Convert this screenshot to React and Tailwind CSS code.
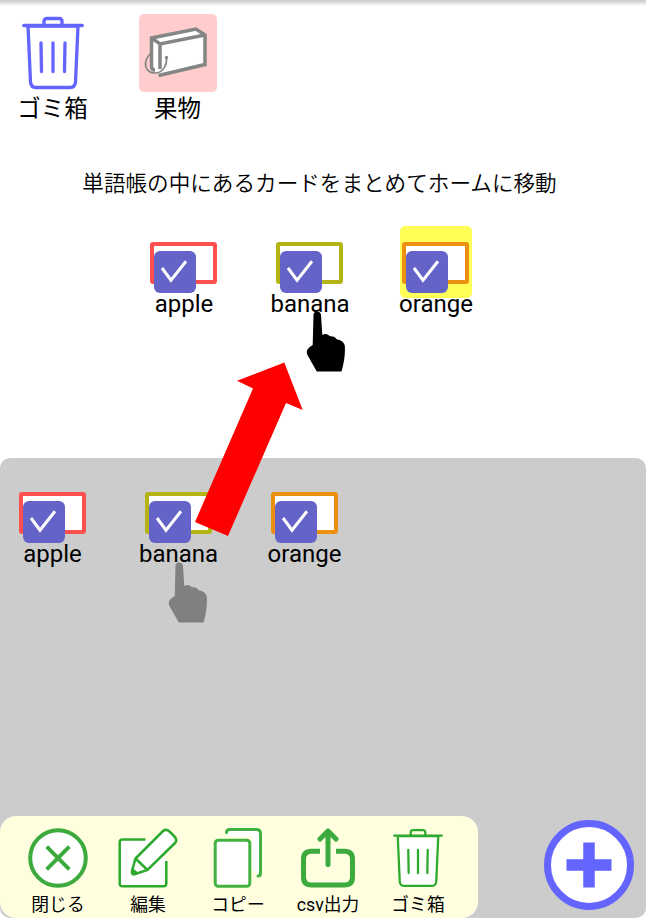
const CARDS = [
  { label: 'apple', frame: 'border-[#ff5050]' },
  { label: 'banana', frame: 'border-[#b4b414]' },
  { label: 'orange', frame: 'border-[#eb9010]' },
];

function Card({ label, frame, highlighted }) {
  return (
    <div className="flex w-[105px] flex-col items-center">
      <div className={`h-[72px] w-[72px] rounded-[5px] pl-[2px] pt-4 ${highlighted ? 'bg-[#ffff58]' : ''}`}>
        <div className={`h-[42px] w-[67px] rounded-[3px] border-4 bg-white ${frame}`}>
          <div className="mt-[4.5px] h-[42px] w-[42px] rounded-[6px] bg-[#6464c8]">
            <svg viewBox="0 0 42 42" className="h-full w-full" fill="none" stroke="white" strokeWidth="3">
              <path d="M8 17 L17 29.2 L32 10.3" />
            </svg>
          </div>
        </div>
      </div>
      <span className="-mt-[6px] text-2xl leading-6">{label}</span>
    </div>
  );
}

function TrashIcon({ className, strokeWidth, fill }) {
  return (
    <svg viewBox="0 0 62 74" className={className} fill="none" stroke="currentColor" strokeWidth={strokeWidth} strokeLinecap="round" strokeLinejoin="round">
      <path d="M6 10 L8.5 66 Q9 71.5 14 71.5 H48 Q53 71.5 53.5 66 L56 10 Z" fill={fill} />
      <path d="M1.7 9.5 H60.3 M22 8.5 V5.5 Q22 2.5 25 2.5 H37 Q40 2.5 40 5.5 V8.5" />
      <path d="M19 27 L19.5 55.5 M31 27 V55.5 M43 27 L42.5 55.5" />
    </svg>
  );
}

function WordBookIcon() {
  return (
    <svg viewBox="0 0 78 78" className="h-[78px] w-[78px]" fill="none" stroke="#858585" strokeWidth="3.5">
      <path d="M12 24 L57 14.5 L66 20.5 V50 L20 61 L12 55 Z" fill="white" stroke="none" />
      <path d="M16 56 Q12.5 56 12.5 52 V24 L57 15 L66 21 V50.5 L19.5 61.5" />
      <path d="M12.5 24 L21 30 L66 21 M21 30 V55" />
      <path d="M12 39 C2 49 7 59 16 59 C24 59 28 51 27.5 44" strokeWidth="1.7" />
      <circle cx="27.5" cy="43.5" r="1.7" fill="#858585" stroke="none" />
    </svg>
  );
}

function Hand({ className }) {
  return (
    <svg viewBox="0 0 40 62" className={className} fill="currentColor">
      <path d="M7.5 4 Q7.5 .5 11 .5 Q14.7 .5 15 4 L16.3 24 Q20.5 21.7 24 25.3 Q28.5 24.7 30.7 28.2 Q37 29 38.8 34.5 Q39.6 47 35.5 60.5 H10.8 L2 45 Q-.2 41 1.5 38.5 Q3 36 6.7 34 Z" />
    </svg>
  );
}

function CloseIcon() {
  return (
    <svg viewBox="0 0 60 60" className="h-[60px] w-[60px]" fill="none" stroke="currentColor" strokeWidth="4">
      <circle cx="30" cy="30" r="27.8" fill="white" />
      <path d="M18.7 18.7 L41.3 41.3 M41.3 18.7 L18.7 41.3" />
    </svg>
  );
}

function EditIcon() {
  return (
    <svg viewBox="0 0 60 60" className="h-[60px] w-[60px] text-[#2daa2d]" fill="none" stroke="currentColor" strokeWidth="2.5">
      <path d="M2 12 H42 L48 33 V58 H2 Z" fill="white" stroke="none" />
      <path d="M27.5 11.5 H4.5 Q1.7 11.5 1.7 14.3 V55.5 Q1.7 58.3 4.5 58.3 H45.5 Q48.3 58.3 48.3 55.5 V33" />
      <path d="M17.5 30.5 L45 3 Q48 .5 51.5 3.5 L56 8 Q60 12 57 15 L29.5 42 L16.5 46.3 Q13.5 47 14 43 Z" fill="white" />
      <path d="M17.5 30.5 L29.5 42" />
      <path d="M14.7 40 L20.5 45 L14 46.5 Z" fill="currentColor" stroke="none" />
    </svg>
  );
}

function CopyIcon() {
  return (
    <svg viewBox="0 0 60 60" className="h-[60px] w-[60px] text-[#41b241]" fill="none" stroke="currentColor" strokeWidth="3" strokeLinecap="round">
      <path d="M18.5 4.5 Q18.5 1.5 21.5 1.5 H48.5 Q52.5 1.5 52.5 5.5 V45 Q52.5 48 50 48" fill="white" />
      <path d="M5.5 8.5 H44 V59" fill="#ffffe0" stroke="none" />
      <rect x="7.2" y="12.2" width="34.6" height="46" rx="3" fill="white" />
    </svg>
  );
}

function ExportIcon() {
  return (
    <svg viewBox="0 0 60 60" className="h-[60px] w-[60px]" fill="none" stroke="currentColor" strokeWidth="5">
      <path d="M22 23.3 H13.5 Q5.5 23.3 5.5 31.3 V49 Q5.5 57 13.5 57 H46.5 Q54.5 57 54.5 49 V31.3 Q54.5 23.3 46.5 23.3 H38" />
      <path d="M30 36.5 V3.5 M22 11 L30 3 L38 11" strokeLinecap="round" strokeLinejoin="round" />
    </svg>
  );
}

const TOOLS = [
  { label: '閉じる', icon: <CloseIcon /> },
  { label: '編集', icon: <EditIcon /> },
  { label: 'コピー', icon: <CopyIcon /> },
  { label: 'csv出力', icon: <ExportIcon /> },
  { label: 'ゴミ箱', icon: <TrashIcon className="h-[60px] w-[52px] text-[#2daa2d]" strokeWidth="2.8" fill="white" /> },
];

export default function App() {
  return (
    <div className="relative flex h-[918px] w-[646px] flex-col overflow-hidden bg-white font-['Roboto','Noto_Sans_CJK_JP',sans-serif] text-black">
      <div className="h-[6px] shrink-0 bg-linear-to-b from-[#c8c8c8] to-white" />
      <main className="h-[452px] shrink-0">
        <div className="flex gap-[20px] pt-2">
          <div className="flex w-[105px] flex-col items-center">
            <div className="flex h-[78px] w-[78px] items-center justify-center text-[#6464ff]">
              <TrashIcon className="h-[74px] w-[62px]" strokeWidth="3.3" fill="none" />
            </div>
            <span className="mt-[5px] text-[23.5px] leading-6">ゴミ箱</span>
          </div>
          <div className="flex w-[105px] flex-col items-center">
            <div className="rounded-[5px] bg-[#ffcdcd]"><WordBookIcon /></div>
            <span className="mt-[5px] text-[23.5px] leading-6">果物</span>
          </div>
        </div>
        <p className="mt-[51px] pr-[7px] text-center text-[21.6px] leading-6 font-[350]">単語帳の中にあるカードをまとめてホームに移動</p>
        <div className="mt-[30px] flex gap-[21px] pl-[131.5px]">
          {CARDS.map((card) => <Card key={card.label} {...card} highlighted={card.label === 'orange'} />)}
        </div>
      </main>

      <section className="flex h-[460px] shrink-0 flex-col justify-between rounded-[10px] bg-[#cccccc]">
        <div className="flex gap-[21px] pt-[18px]">
          {CARDS.map((card) => <Card key={card.label} {...card} />)}
        </div>
        <div className="flex items-center justify-between pr-3">
          <nav className="flex h-[102px] w-[478px] rounded-[16px] bg-[#ffffe0] pl-[13px] pt-3 text-[#3caa3c]">
            {TOOLS.map((tool) => (
              <button key={tool.label} className="flex w-[90px] flex-col items-center">
                {tool.icon}
                <span className="mt-2 text-[17.8px] leading-[18px] text-black">{tool.label}</span>
              </button>
            ))}
          </nav>
          <button className="-mt-[5px] text-[#6464ff]" aria-label="+">
            <svg viewBox="0 0 90 90" className="h-[90px] w-[90px]">
              <circle cx="45" cy="45" r="41.5" fill="white" stroke="currentColor" strokeWidth="7" />
              <path d="M45 22.5 V67.5 M22.5 45 H67.5" stroke="currentColor" strokeWidth="11.5" />
            </svg>
          </button>
        </div>
      </section>

      <Hand className="absolute left-[306px] top-[310.5px] h-[62px] w-10 text-black" />
      <Hand className="absolute left-[168px] top-[561.5px] h-[62px] w-10 text-[#808080]" />
      <svg viewBox="0 0 110 176" className="absolute left-[194px] top-[361px] h-[176px] w-[110px]">
        <polygon points="90.3,1.5 108.7,49 92,42 34,175 1,161 59,27.5 43,19.8" fill="#ff0000" />
      </svg>
    </div>
  );
}
